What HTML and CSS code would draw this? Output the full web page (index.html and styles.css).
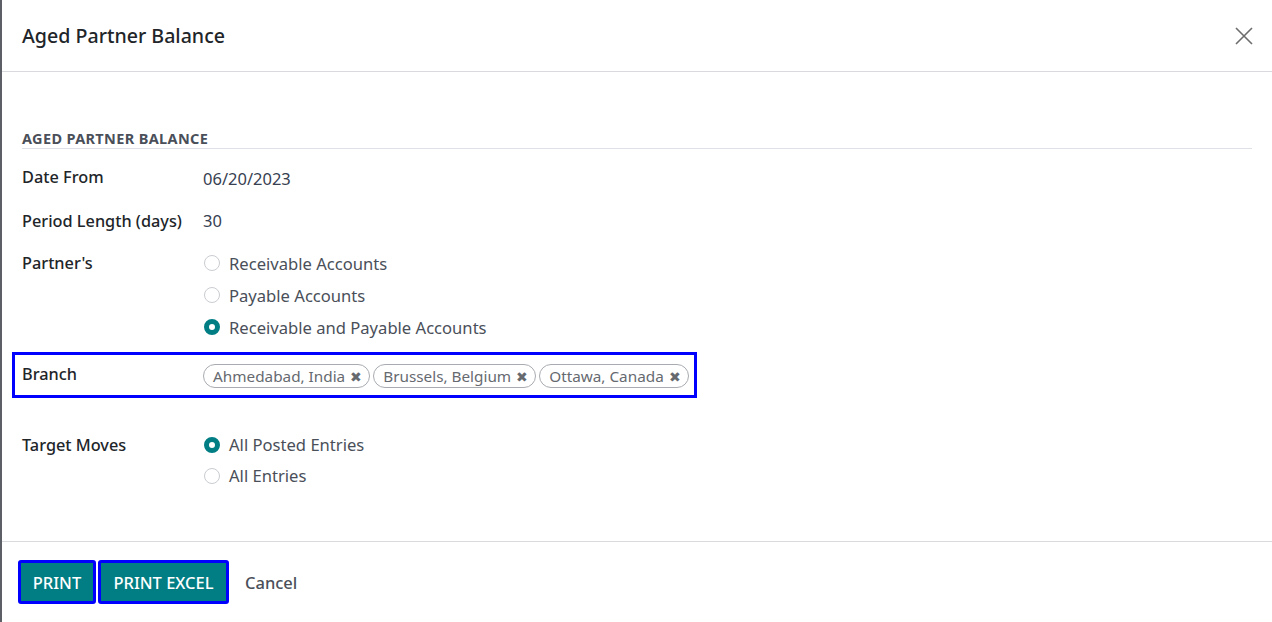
FILE: index.html
```html
<!DOCTYPE html>
<html>
<head>
<meta charset="utf-8">
<link rel="stylesheet" href="styles.css">
</head>
<body>
<div class="modal">
  <header class="modal-header">
    <h4 class="modal-title">Aged Partner Balance</h4>
    <button class="close" aria-label="Close">
      <svg width="20" height="20" viewBox="0 0 20 20"><path d="M2 2L18 18M18 2L2 18" stroke="#6c6c6c" stroke-width="1.6" fill="none"/></svg>
    </button>
  </header>
  <main class="modal-body">
    <div class="section-title">AGED PARTNER BALANCE</div>
    <div class="row r-date">
      <div class="label">Date From</div>
      <div class="value date">06/20/2023</div>
    </div>
    <div class="row r-period">
      <div class="label">Period Length (days)</div>
      <div class="value">30</div>
    </div>
    <div class="row r-partner">
      <div class="label">Partner's</div>
      <div class="radios">
        <div class="radio"><span class="dot"></span>Receivable Accounts</div>
        <div class="radio"><span class="dot"></span>Payable Accounts</div>
        <div class="radio"><span class="dot on"></span>Receivable and Payable Accounts</div>
      </div>
    </div>
    <div class="row r-branch">
      <div class="label">Branch</div>
      <div class="tags">
        <span class="tag">Ahmedabad, India <span class="x">✖</span></span>
        <span class="tag">Brussels, Belgium <span class="x">✖</span></span>
        <span class="tag">Ottawa, Canada <span class="x">✖</span></span>
      </div>
    </div>
    <div class="row r-target">
      <div class="label">Target Moves</div>
      <div class="radios">
        <div class="radio"><span class="dot on"></span>All Posted Entries</div>
        <div class="radio"><span class="dot"></span>All Entries</div>
      </div>
    </div>
  </main>
  <footer class="modal-footer">
    <button class="btn primary">PRINT</button>
    <button class="btn primary wide">PRINT EXCEL</button>
    <button class="btn link">Cancel</button>
  </footer>
</div>
</body>
</html>
```
FILE: styles.css
```css
html, body {
  margin: 0;
  padding: 0;
  height: 100%;
}
body {
  background: #5d5f66;
  font-family: "Noto Sans", "Open Sans", sans-serif;
  color: #212529;
  overflow: hidden;
}
.modal {
  margin-left: 2px;
  height: 622px;
  background: #fff;
  display: flex;
  flex-direction: column;
}
.modal-header {
  height: 72px;
  box-sizing: border-box;
  border-bottom: 1px solid #d8dadd;
  display: flex;
  align-items: center;
  justify-content: space-between;
  padding: 0 18px 0 20px;
}
.modal-title {
  margin: 0;
  font-size: 19.6px;
  font-weight: 500;
  color: #212529;
}
.close {
  background: none;
  border: 0;
  padding: 0;
  width: 20px;
  height: 20px;
  display: flex;
}
.modal-body {
  flex: 1;
  padding: 0 20px;
}
.section-title {
  margin-top: 56px;
  line-height: 20px;
  font-size: 14.5px;
  letter-spacing: 0.35px;
  font-weight: 700;
  color: #4a4f59;
  border-bottom: 1px solid #dee2e6;
}
.row {
  display: flex;
  align-items: flex-start;
}
.label {
  width: 181px;
  flex: none;
  font-size: 16.3px;
  font-weight: 500;
  line-height: 32px;
  height: 32px;
  color: #212529;
}
.value {
  font-size: 16.5px;
  line-height: 32px;
  color: #374151;
}
.value.date { padding-top: 3px; line-height: 29px; }
.r-date { margin-top: 12px; }
.r-period { margin-top: 12px; }
.r-partner { margin-top: 10px; }
.radios { display: flex; flex-direction: column; }
.radio {
  display: flex;
  align-items: center;
  height: 32px;
  font-size: 16.6px;
  color: #4a4f59;
}
.r-target .radio { height: 31px; }
.dot {
  width: 16px;
  height: 16px;
  box-sizing: border-box;
  border-radius: 50%;
  border: 1px solid #c9ccd0;
  margin: 0 9px 0 1px;
  background: #fff;
}
.dot.on {
  border: 5px solid #017e84;
  background: #fff;
}
.r-branch {
  margin: 9px 0 0 -10px;
  width: 685px;
  height: 46px;
  box-sizing: border-box;
  border: 3px solid #0000ff;
  padding-left: 7px;
  align-items: center;
}
.r-branch .label { height: auto; line-height: 24px; margin-top: -3px; }
.tags { display: flex; gap: 3px; padding-top: 2px; }
.tag {
  display: inline-flex;
  align-items: center;
  height: 24px;
  box-sizing: border-box;
  border: 1px solid #a8abb0;
  border-radius: 12px;
  padding: 0 7px 0 9px;
  font-size: 15.3px;
  color: #666a70;
  white-space: nowrap;
}
.tag .x {
  margin-left: 5px;
  font-size: 14px;
  color: #66696e;
}
.r-target { margin-top: 31px; }
.modal-footer {
  height: 81px;
  box-sizing: border-box;
  border-top: 1px solid #d8dadd;
  display: flex;
  align-items: flex-start;
  padding: 18px 0 0 16px;
  gap: 2px;
}
.btn {
  font-family: inherit;
  font-size: 16.5px;
  font-weight: 500;
  height: 44px;
  box-sizing: border-box;
  border-radius: 3px;
  cursor: pointer;
  white-space: nowrap;
}
.btn.primary {
  background: #017e84;
  color: #fff;
  border: 3px solid #0000ff;
  padding: 0 10px;
}
.btn.primary:first-child { width: 78px; }
.btn.wide { width: 131px; }
.btn.link {
  background: none;
  border: 0;
  color: #4a4f59;
  padding: 0 14px;
  margin-left: 0;
}
```
